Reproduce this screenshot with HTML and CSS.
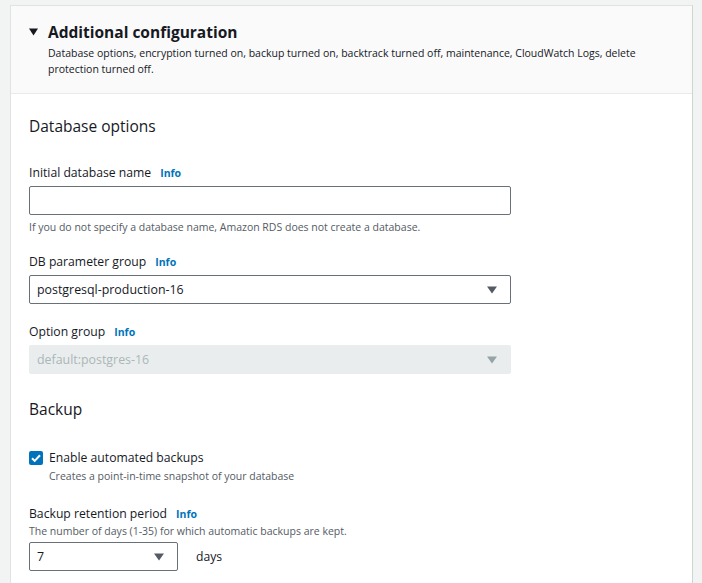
FILE: index.html
```html
<!DOCTYPE html>
<html lang="en">
<head>
<meta charset="utf-8">
<title>Additional configuration</title>
<link rel="stylesheet" href="styles.css">
</head>
<body>
<div class="panel">
  <div class="panel-header">
    <div class="panel-title">
      <svg class="caret" width="9" height="8" viewBox="0 0 9 8"><path d="M0 0.5h9L4.5 7.5z" fill="#16191f"/></svg>
      <span>Additional configuration</span>
    </div>
    <p class="panel-desc">Database options, encryption turned on, backup turned on, backtrack turned off, maintenance, CloudWatch Logs, delete protection turned off.</p>
  </div>
  <div class="panel-body">
    <h3 class="section-title">Database options</h3>

    <div class="field first">
      <div class="label">Initial database name <a class="info">Info</a></div>
      <div class="input"></div>
      <div class="hint">If you do not specify a database name, Amazon RDS does not create a database.</div>
    </div>

    <div class="field">
      <div class="label">DB parameter group <a class="info">Info</a></div>
      <div class="select">
        <span>postgresql-production-16</span>
        <svg width="10" height="8" viewBox="0 0 10 8"><path d="M0 0.5h10L5 7.5z" fill="#545b64"/></svg>
      </div>
    </div>

    <div class="field">
      <div class="label">Option group <a class="info">Info</a></div>
      <div class="select disabled">
        <span>default:postgres-16</span>
        <svg width="10" height="8" viewBox="0 0 10 8"><path d="M0 0.5h10L5 7.5z" fill="#95a5a6"/></svg>
      </div>
    </div>

    <h3 class="section-title backup">Backup</h3>

    <div class="check-row">
      <span class="checkbox">
        <svg width="14" height="14" viewBox="0 0 14 14"><path d="M3 7.2l2.7 2.7L11 4.3" fill="none" stroke="#fff" stroke-width="2"/></svg>
      </span>
      <div>
        <div class="check-label">Enable automated backups</div>
        <div class="hint check-hint">Creates a point-in-time snapshot of your database</div>
      </div>
    </div>

    <div class="field retention">
      <div class="label">Backup retention period <a class="info">Info</a></div>
      <div class="hint desc">The number of days (1-35) for which automatic backups are kept.</div>
      <div class="inline">
        <div class="select small">
          <span>7</span>
          <svg width="10" height="8" viewBox="0 0 10 8"><path d="M0 0.5h10L5 7.5z" fill="#545b64"/></svg>
        </div>
        <span class="unit">days</span>
      </div>
    </div>
  </div>
</div>
</body>
</html>
```

FILE: styles.css
```css
html, body {
  margin: 0;
  padding: 0;
  background: #f2f3f3;
  font-family: "Open Sans", "Noto Sans", sans-serif;
  color: #16191f;
}

.panel {
  margin: 5px 0 0 10px;
  width: 683px;
  height: calc(100vh - 5px);
  box-sizing: border-box;
  overflow: hidden;
  background: #fff;
  border: 1px solid #dfe3e3;
  border-right-color: #cfd4d4;
  border-bottom: none;
}

.panel-header {
  background: #fafafa;
  border-bottom: 1px solid #e9ebeb;
  padding: 15px 18px 16px 18px;
}

.panel-title {
  display: flex;
  align-items: center;
  gap: 10px;
  font-size: 15.5px;
  font-weight: 700;
  line-height: 22px;
}

.caret {
  display: block;
}

.panel-desc {
  margin: 2px 0 0 19px;
  font-size: 10.5px;
  line-height: 16px;
  color: #16191f;
}

.panel-body {
  padding: 22px 18px 0 18px;
}

.section-title {
  margin: 0;
  font-size: 15.5px;
  font-weight: 400;
  line-height: 20px;
}

.section-title.backup {
  margin-top: 25px;
}

.field {
  margin-top: 20px;
}

.field.first {
  margin-top: 29px;
}

.label {
  font-size: 12.2px;
  line-height: 16px;
  display: flex;
  align-items: center;
  gap: 9px;
}

.info {
  color: #0073bb;
  font-weight: 700;
  font-size: 10.5px;
}

.input,
.select {
  margin-top: 5px;
  width: 482px;
  height: 29px;
  box-sizing: border-box;
  border: 1px solid #687078;
  border-radius: 2px;
  background: #fff;
}

.select {
  display: flex;
  align-items: center;
  justify-content: space-between;
  padding: 0 13px 0 7px;
  font-size: 12.4px;
}

.select svg {
  display: block;
}

.select.disabled {
  background: #eaeded;
  border-color: #eaeded;
  color: #aab7b8;
}

.select.small {
  width: 149px;
  margin-top: 0;
}

.hint {
  margin-top: 5px;
  font-size: 10.5px;
  line-height: 14px;
  color: #545b64;
}

.check-row {
  margin-top: 31px;
  display: flex;
  gap: 6px;
  align-items: flex-start;
}

.checkbox {
  margin-top: 1px;
  width: 14px;
  height: 14px;
  border-radius: 2px;
  background: #0073bb;
  display: block;
  flex: none;
}

.checkbox svg {
  display: block;
}

.check-label {
  font-size: 12.2px;
  line-height: 16px;
}

.check-hint {
  margin-top: 3px;
}

.field.retention {
  margin-top: 23px;
}

.hint.desc {
  margin-top: 2px;
}

.inline {
  margin-top: 4px;
  display: flex;
  align-items: center;
  gap: 18px;
}

.unit {
  font-size: 12.2px;
}
```
